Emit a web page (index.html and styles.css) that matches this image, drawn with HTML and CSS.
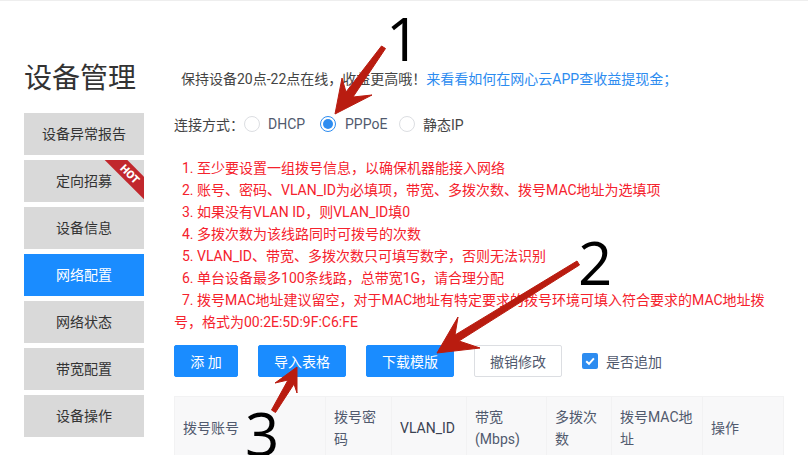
FILE: index.html
```html
<!DOCTYPE html>
<html lang="zh-CN">
<head>
<meta charset="utf-8">
<title>设备管理</title>
<link rel="stylesheet" href="styles.css">
</head>
<body>
<div class="page">
  <aside class="side">
    <h1 class="title">设备管理</h1>
    <nav class="menu">
      <a class="item">设备异常报告</a>
      <a class="item hot-item">定向招募<span class="hot"><span class="hot-text">HOT</span></span></a>
      <a class="item">设备信息</a>
      <a class="item active">网络配置</a>
      <a class="item">网络状态</a>
      <a class="item">带宽配置</a>
      <a class="item">设备操作</a>
    </nav>
  </aside>
  <main class="main">
    <p class="notice">保持设备20点-22点在线，收益更高哦！<a class="link">来看看如何在网心云APP查收益提现金；</a></p>
    <div class="conn">
      <span class="conn-label">连接方式：</span>
      <span class="radio"></span><span class="opt opt-a">DHCP</span>
      <span class="radio on"></span><span class="opt opt-b">PPPoE</span>
      <span class="radio"></span><span class="opt opt-c">静态IP</span>
    </div>
    <div class="rules">
      <p>1. 至少要设置一组拨号信息，以确保机器能接入网络</p>
      <p>2. 账号、密码、VLAN_ID为必填项，带宽、多拨次数、拨号MAC地址为选填项</p>
      <p>3. 如果没有VLAN ID，则VLAN_ID填0</p>
      <p>4. 多拨次数为该线路同时可拨号的次数</p>
      <p>5. VLAN_ID、带宽、多拨次数只可填写数字，否则无法识别</p>
      <p>6. 单台设备最多100条线路，总带宽1G，请合理分配</p>
      <p>7. 拨号MAC地址建议留空，对于MAC地址有特定要求的拨号环境可填入符合要求的MAC地址拨号，格式为00:2E:5D:9F:C6:FE</p>
    </div>
    <div class="actions">
      <button class="btn primary add">添 加</button>
      <button class="btn primary wide">导入表格</button>
      <button class="btn primary wide">下载模版</button>
      <button class="btn plain wide">撤销修改</button>
      <label class="check"><span class="box"><svg width="12" height="12" viewBox="0 0 12 12"><path d="M2.2 6.2 5 8.8 9.9 3.4" fill="none" stroke="#fff" stroke-width="2"/></svg></span>是否追加</label>
    </div>
    <table class="grid">
      <colgroup>
        <col class="c1"><col class="c2"><col class="c3"><col class="c4"><col class="c5"><col class="c6"><col class="c7">
      </colgroup>
      <thead>
        <tr>
          <th>拨号账号</th><th>拨号密码</th><th class="latin">VLAN_ID</th><th>带宽(Mbps)</th><th>多拨次数</th><th>拨号MAC地址</th><th>操作</th>
        </tr>
      </thead>
    </table>
  </main>
</div>
<svg class="arrows" width="808" height="455" viewBox="0 0 808 455">
  <g class="arrow">
    <path d="M335 114 342 78 346 92 381.500 46 385.500 48.500 353 97 372 95Z"/>
    <path d="M437 353 458 317 455 335 577 261 579.500 265 459 341 480 348Z"/>
    <path d="M297 367 275 383 288 380 271.500 410 275.500 412.500 294 384 297 393Z"/>
  </g>
</svg>
<span class="num n1">1</span>
<span class="num n2">2</span>
<span class="num n3">3</span>
</body>
</html>
```
FILE: styles.css
```css
* { box-sizing: border-box; }
html, body { margin: 0; padding: 0; }
body {
  width: 808px;
  height: 455px;
  overflow: hidden;
  position: relative;
  background: #fff;
  border-top: 1px solid #eee;
  font-family: Roboto, "Noto Sans CJK SC", sans-serif;
  font-size: 14px;
  color: #515a6e;
}
.page { display: flex; padding: 0 24px; }
.side { width: 120px; flex: none; padding-top: 58px; }
.title {
  margin: 0 0 14px;
  height: 40px;
  line-height: 40px;
  font-size: 28px;
  font-weight: 400;
  color: #333;
  white-space: nowrap;
}
.menu { display: flex; flex-direction: column; gap: 5px; }
.item {
  position: relative;
  height: 42px;
  line-height: 42px;
  text-align: center;
  background: #d9d9d9;
  color: #333;
  overflow: hidden;
}
.item.active { background: #1a8cff; color: #fff; }
.hot {
  position: absolute;
  top: 6px;
  right: -24px;
  width: 76px;
  height: 16px;
  background: #c1272d;
  transform: rotate(45deg);
  display: flex;
  align-items: center;
  justify-content: center;
}
.hot-text { font-size: 11px; line-height: 1; font-weight: 900; color: #fff; }
.main { margin-left: 30px; width: 610px; flex: none; }
.notice { margin: 0; padding: 68px 0 0 7px; line-height: 20px; color: #444; white-space: nowrap; }
.link { color: #2d8cf0; }
.conn { display: flex; align-items: center; height: 20px; margin-top: 25px; color: #444; white-space: nowrap; }
.conn-label { width: 70px; flex: none; }
.radio {
  width: 16px;
  height: 16px;
  flex: none;
  border: 1px solid #dcdee2;
  border-radius: 50%;
  background: #fff;
}
.radio.on { border-color: #2d8cf0; display: flex; align-items: center; justify-content: center; }
.radio.on::after { content: ""; width: 10px; height: 10px; border-radius: 50%; background: #2d8cf0; }
.opt { margin-left: 8px; color: #515a6e; }
.opt-a { width: 52px; }
.opt-b { margin-left: 9px; width: 54px; }
.opt-c { color: #444; }
.rules { margin-top: 23px; color: #f5222d; line-height: 22px; width: 610px; }
.rules p { margin: 0; text-indent: 8px; }
.actions { display: flex; align-items: center; height: 32px; margin-top: 12px; }
.btn {
  height: 32px;
  margin-right: 20px;
  padding: 0;
  border: 1px solid #1a8cff;
  border-radius: 2px;
  font: inherit;
  background: #1a8cff;
  color: #fff;
}
.add { width: 64px; }
.wide { width: 88px; }
.plain { background: #fff; border-color: #dcdee2; color: #515a6e; }
.check { display: flex; align-items: center; color: #515a6e; }
.box {
  width: 16px;
  height: 16px;
  margin-right: 8px;
  border-radius: 2px;
  background: #2d8cf0;
  display: flex;
  align-items: center;
  justify-content: center;
}
.grid {
  width: 609px;
  margin-top: 19px;
  border-collapse: collapse;
  table-layout: fixed;
  background: #f8f8f9;
}
.grid th {
  padding: 0 8px;
  height: 62px;
  line-height: 22px;
  text-align: left;
  font-weight: 400;
  color: #515a6e;
  border: 1px solid #f2f2f3;
}
.grid .latin { color: #3a4252; }
.c1 { width: 151px; }
.c2 { width: 66px; }
.c3 { width: 75px; }
.c4 { width: 80px; }
.c5 { width: 65px; }
.c6 { width: 91px; }
.c7 { width: 81px; }
.arrows { position: absolute; left: 0; top: -1px; }
.arrow { fill: #b91c10; stroke: #b91c10; stroke-width: 1; stroke-linejoin: round; }
.num {
  position: absolute;
  font-family: "Open Sans", sans-serif;
  font-size: 60px;
  line-height: 60px;
  color: #000;
}
.n1 { left: 386px; top: 7px; }
.n2 { left: 578px; top: 231px; }
.n3 { left: 245px; top: 402px; }
```
